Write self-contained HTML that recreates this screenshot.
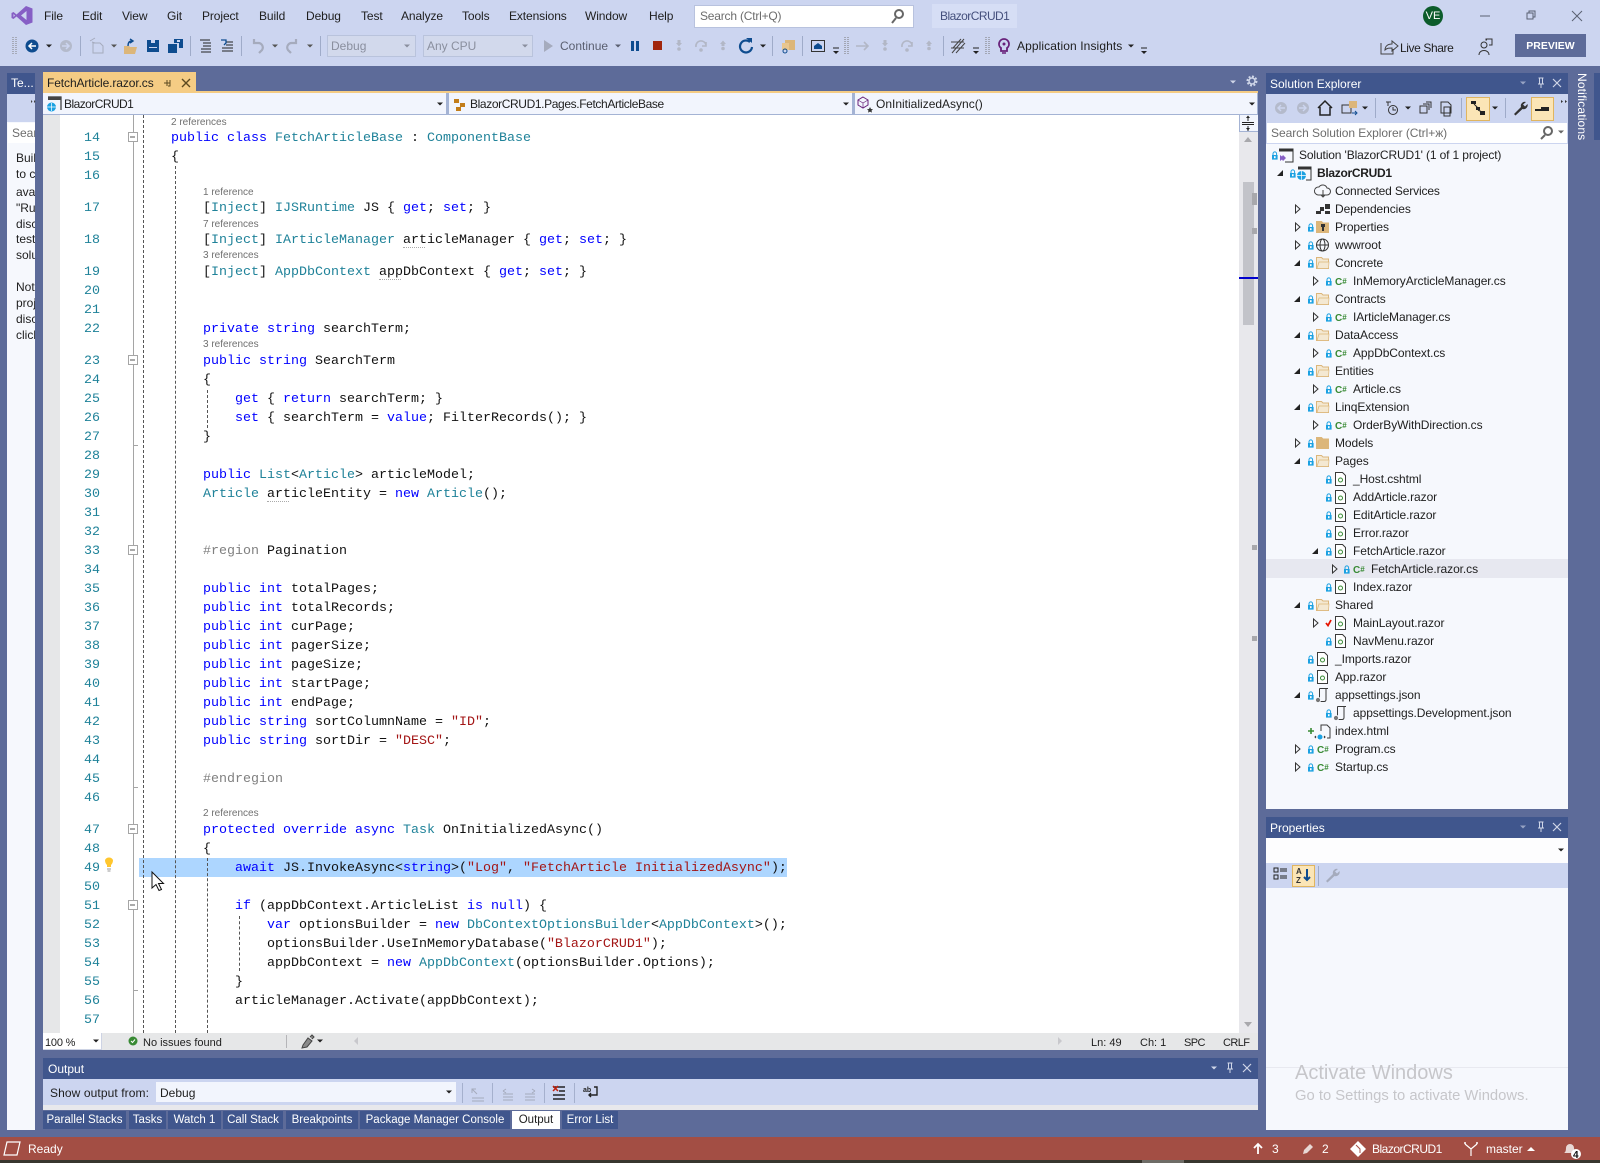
<!DOCTYPE html>
<html><head><meta charset="utf-8"><title>FetchArticle.razor.cs</title>
<style>
html,body{margin:0;padding:0;width:1600px;height:1163px;overflow:hidden;background:#5d6b99;font-family:"Liberation Sans","DejaVu Sans",sans-serif;font-size:12px;color:#1e1e1e}
.b{position:absolute}
.t{position:absolute;white-space:pre;line-height:16px;font-size:12px}
.m{top:8px;color:#1e1e1e;letter-spacing:-.1px}
.h{color:#fff}
.c{position:absolute;white-space:pre;font:13.33px/19px "Liberation Mono",monospace;color:#111;height:19px;margin-top:2px}
.c0{left:171px}.c4{left:203px}.c8{left:235px}.c12{left:267px}
.n{position:absolute;left:60px;width:40px;text-align:right;font:13.33px/19px "Liberation Mono",monospace;color:#1f8299;height:19px;margin-top:2px}
i{font-style:normal;color:#0000ff}
u{text-decoration:none;color:#1f8299}
s{text-decoration:none;color:#a31515}
.l{position:absolute;white-space:pre;font-size:10px;line-height:12px;color:#707070;margin-top:1px}
.r{position:absolute;white-space:pre;font-size:12px;line-height:18px;height:18px;color:#1e1e1e;letter-spacing:-.08px}
.o{position:absolute;top:1111px;height:18px;background:#40568d;color:#fff;font-size:11.5px;line-height:18px;text-align:center;white-space:pre}
.s{position:absolute;white-space:pre;font-size:11px;line-height:16px;top:1035px;color:#1e1e1e}
.w{position:absolute;white-space:pre;font-size:12px;line-height:16px;top:1141px;color:#fff}
</style></head><body>

<!-- top chrome -->
<div class="b" style="left:0;top:0;width:1600px;height:66px;background:#ccd5f0"></div>
<div class="t m" style="left:44px">File</div>
<div class="t m" style="left:82px">Edit</div>
<div class="t m" style="left:122px">View</div>
<div class="t m" style="left:167px">Git</div>
<div class="t m" style="left:202px">Project</div>
<div class="t m" style="left:259px">Build</div>
<div class="t m" style="left:306px">Debug</div>
<div class="t m" style="left:361px">Test</div>
<div class="t m" style="left:401px">Analyze</div>
<div class="t m" style="left:462px">Tools</div>
<div class="t m" style="left:509px">Extensions</div>
<div class="t m" style="left:585px">Window</div>
<div class="t m" style="left:649px">Help</div>
<div class="b" style="left:694px;top:5px;width:218px;height:21px;background:#fff;border:1px solid #b8c2de"></div>
<div class="t" style="left:700px;top:8px;color:#6d6d6d;letter-spacing:-.2px">Search (Ctrl+Q)</div>
<div class="b" style="left:932px;top:4px;width:85px;height:24px;background:#d6def5"></div>
<div class="t" style="left:940px;top:8px;color:#444f7c;letter-spacing:-.55px">BlazorCRUD1</div>

<div class="b" style="left:327px;top:35px;width:87px;height:20px;background:#d2d9ec;border:1px solid #b9c3dc"></div>
<div class="t" style="left:331px;top:38px;color:#8a8f9e">Debug</div>
<div class="b" style="left:423px;top:35px;width:108px;height:20px;background:#d2d9ec;border:1px solid #b9c3dc"></div>
<div class="t" style="left:427px;top:38px;color:#8a8f9e">Any CPU</div>
<div class="t" style="left:560px;top:38px;color:#5a5f70">Continue</div>
<div class="t" style="left:1017px;top:38px;letter-spacing:.1px">Application Insights</div>
<div class="t" style="left:1400px;top:40px;letter-spacing:-.4px">Live Share</div>
<div class="b" style="left:1515px;top:34px;width:71px;height:23px;background:#5d6b99;color:#fff;font-weight:bold;font-size:10.5px;line-height:24px;text-align:center">PREVIEW</div>
<div class="b" style="left:1423px;top:6px;width:20px;height:20px;border-radius:10px;background:#0c5c2b;color:#fff;font-size:11px;line-height:20px;text-align:center">VE</div>

<!-- left panel -->
<div class="b" style="left:7px;top:73px;width:28px;height:21px;background:#40568d"></div>
<div class="t h" style="left:11px;top:75px">Te...</div>
<div class="b" style="left:7px;top:94px;width:28px;height:28px;background:#ccd5f0"></div>
<div class="b" style="left:7px;top:122px;width:28px;height:1008px;background:#f6f8fd;overflow:hidden">
<div class="b" style="left:1px;top:1px;width:30px;height:20px;background:#fff"></div>
<div class="t" style="left:5px;top:3px;color:#6d6d6d">Search</div>
<div class="t" style="left:9px;top:28px">Build</div>
<div class="t" style="left:9px;top:44px">to co</div>
<div class="t" style="left:9px;top:62px">avai</div>
<div class="t" style="left:9px;top:78px">"Run</div>
<div class="t" style="left:9px;top:94px">disc</div>
<div class="t" style="left:9px;top:109px">test</div>
<div class="t" style="left:9px;top:125px">solu</div>
<div class="t" style="left:9px;top:157px">Note</div>
<div class="t" style="left:9px;top:173px">proj</div>
<div class="t" style="left:9px;top:189px">disc</div>
<div class="t" style="left:9px;top:205px">click</div>
</div>

<!-- document tab -->
<div class="b" style="left:43px;top:72px;width:153px;height:19px;background:#f5cc84"></div>
<div class="t" style="left:47px;top:75px;color:#1e1e1e;letter-spacing:-.1px">FetchArticle.razor.cs</div>
<div class="b" style="left:43px;top:91px;width:1215px;height:2px;background:#f5cc84"></div>
<!-- nav bar -->
<div class="b" style="left:43px;top:93px;width:1215px;height:22px;background:#a4b3d4"></div>
<div class="b" style="left:43px;top:93px;width:403px;height:21px;background:#f2f5fd"></div>
<div class="b" style="left:449px;top:93px;width:403px;height:21px;background:#f2f5fd"></div>
<div class="b" style="left:855px;top:93px;width:402px;height:21px;background:#f2f5fd"></div>
<div class="t" style="left:64px;top:96px;letter-spacing:-.55px">BlazorCRUD1</div>
<div class="t" style="left:470px;top:96px;letter-spacing:-.38px">BlazorCRUD1.Pages.FetchArticleBase</div>
<div class="t" style="left:876px;top:96px">OnInitializedAsync()</div>

<!-- editor -->
<div class="b" style="left:43px;top:115px;width:1215px;height:918px;background:#fff;overflow:hidden"></div>
<div class="b" style="left:43px;top:115px;width:17px;height:918px;background:#e6e7e8"></div>
<div class="b" style="left:133px;top:115px;width:1px;height:918px;background:#a5a5a5"></div>
<div class="b" style="left:139px;top:858px;width:648px;height:19px;background:#add6ff"></div>
<div class="b" style="left:143px;top:115px;width:0;height:918px;border-left:1px dashed #555"></div>
<div class="b" style="left:175px;top:166px;width:0;height:867px;border-left:1px dashed #555"></div>
<div class="b" style="left:207px;top:390px;width:0;height:38px;border-left:1px dashed #555"></div>
<div class="b" style="left:207px;top:858px;width:0;height:175px;border-left:1px dashed #555"></div>
<div class="b" style="left:239px;top:916px;width:0;height:55px;border-left:1px dashed #555"></div>
<div class="b" style="left:133px;top:445px;width:5px;height:1px;background:#a5a5a5"></div>
<div class="b" style="left:133px;top:787px;width:5px;height:1px;background:#a5a5a5"></div>
<div class="b" style="left:133px;top:990px;width:5px;height:1px;background:#a5a5a5"></div>

<div class="l" style="left:171px;top:116px">2 references</div>
<div class="l" style="left:203px;top:186px">1 reference</div>
<div class="l" style="left:203px;top:218px">7 references</div>
<div class="l" style="left:203px;top:249px">3 references</div>
<div class="l" style="left:203px;top:338px">3 references</div>
<div class="l" style="left:203px;top:807px">2 references</div>

<div class="n" style="top:127px">14</div><div class="n" style="top:146px">15</div><div class="n" style="top:165px">16</div><div class="n" style="top:197px">17</div><div class="n" style="top:229px">18</div><div class="n" style="top:261px">19</div><div class="n" style="top:280px">20</div><div class="n" style="top:299px">21</div><div class="n" style="top:318px">22</div><div class="n" style="top:350px">23</div><div class="n" style="top:369px">24</div><div class="n" style="top:388px">25</div><div class="n" style="top:407px">26</div><div class="n" style="top:426px">27</div><div class="n" style="top:445px">28</div><div class="n" style="top:464px">29</div><div class="n" style="top:483px">30</div><div class="n" style="top:502px">31</div><div class="n" style="top:521px">32</div><div class="n" style="top:540px">33</div><div class="n" style="top:559px">34</div><div class="n" style="top:578px">35</div><div class="n" style="top:597px">36</div><div class="n" style="top:616px">37</div><div class="n" style="top:635px">38</div><div class="n" style="top:654px">39</div><div class="n" style="top:673px">40</div><div class="n" style="top:692px">41</div><div class="n" style="top:711px">42</div><div class="n" style="top:730px">43</div><div class="n" style="top:749px">44</div><div class="n" style="top:768px">45</div><div class="n" style="top:787px">46</div><div class="n" style="top:819px">47</div><div class="n" style="top:838px">48</div><div class="n" style="top:857px">49</div><div class="n" style="top:876px">50</div><div class="n" style="top:895px">51</div><div class="n" style="top:914px">52</div><div class="n" style="top:933px">53</div><div class="n" style="top:952px">54</div><div class="n" style="top:971px">55</div><div class="n" style="top:990px">56</div><div class="n" style="top:1009px">57</div>

<div class="c c0" style="top:127px"><i>public</i> <i>class</i> <u>FetchArticleBase</u> : <u>ComponentBase</u></div>
<div class="c c0" style="top:146px">{</div>
<div class="c c4" style="top:197px">[<u>Inject</u>] <u>IJSRuntime</u> JS { <i>get</i>; <i>set</i>; }</div>
<div class="c c4" style="top:229px">[<u>Inject</u>] <u>IArticleManager</u> articleManager { <i>get</i>; <i>set</i>; }</div>
<div class="c c4" style="top:261px">[<u>Inject</u>] <u>AppDbContext</u> appDbContext { <i>get</i>; <i>set</i>; }</div>
<div class="c c4" style="top:318px"><i>private</i> <i>string</i> searchTerm;</div>
<div class="c c4" style="top:350px"><i>public</i> <i>string</i> SearchTerm</div>
<div class="c c4" style="top:369px">{</div>
<div class="c c8" style="top:388px"><i>get</i> { <i>return</i> searchTerm; }</div>
<div class="c c8" style="top:407px"><i>set</i> { searchTerm = <i>value</i>; FilterRecords(); }</div>
<div class="c c4" style="top:426px">}</div>
<div class="c c4" style="top:464px"><i>public</i> <u>List</u>&lt;<u>Article</u>&gt; articleModel;</div>
<div class="c c4" style="top:483px"><u>Article</u> articleEntity = <i>new</i> <u>Article</u>();</div>
<div class="c c4" style="top:540px"><span style="color:#808080">#region</span> Pagination</div>
<div class="c c4" style="top:578px"><i>public</i> <i>int</i> totalPages;</div>
<div class="c c4" style="top:597px"><i>public</i> <i>int</i> totalRecords;</div>
<div class="c c4" style="top:616px"><i>public</i> <i>int</i> curPage;</div>
<div class="c c4" style="top:635px"><i>public</i> <i>int</i> pagerSize;</div>
<div class="c c4" style="top:654px"><i>public</i> <i>int</i> pageSize;</div>
<div class="c c4" style="top:673px"><i>public</i> <i>int</i> startPage;</div>
<div class="c c4" style="top:692px"><i>public</i> <i>int</i> endPage;</div>
<div class="c c4" style="top:711px"><i>public</i> <i>string</i> sortColumnName = <s>"ID"</s>;</div>
<div class="c c4" style="top:730px"><i>public</i> <i>string</i> sortDir = <s>"DESC"</s>;</div>
<div class="c c4" style="top:768px;color:#808080">#endregion</div>
<div class="c c4" style="top:819px"><i>protected</i> <i>override</i> <i>async</i> <u>Task</u> OnInitializedAsync()</div>
<div class="c c4" style="top:838px">{</div>
<div class="c c8" style="top:857px"><i>await</i> JS.InvokeAsync&lt;<i>string</i>&gt;(<s>"Log"</s>, <s>"FetchArticle InitializedAsync"</s>);</div>
<div class="c c8" style="top:895px"><i>if</i> (appDbContext.ArticleList <i>is</i> <i>null</i>) {</div>
<div class="c c12" style="top:914px"><i>var</i> optionsBuilder = <i>new</i> <u>DbContextOptionsBuilder</u>&lt;<u>AppDbContext</u>&gt;();</div>
<div class="c c12" style="top:933px">optionsBuilder.UseInMemoryDatabase(<s>"BlazorCRUD1"</s>);</div>
<div class="c c12" style="top:952px">appDbContext = <i>new</i> <u>AppDbContext</u>(optionsBuilder.Options);</div>
<div class="c c8" style="top:971px">}</div>
<div class="c c8" style="top:990px">articleManager.Activate(appDbContext);</div>

<!-- squiggle hints -->
<div class="b" style="left:403px;top:247px;width:22px;height:0;border-top:1px dotted #aaa"></div>
<div class="b" style="left:379px;top:279px;width:22px;height:0;border-top:1px dotted #aaa"></div>
<div class="b" style="left:267px;top:501px;width:22px;height:0;border-top:1px dotted #aaa"></div>

<!-- editor scrollbar -->
<div class="b" style="left:1239px;top:115px;width:19px;height:918px;background:#e8e8ec"></div>
<div class="b" style="left:1239px;top:115px;width:18px;height:16px;background:#f2f5fd;border-left:1px solid #a4b3d4;border-bottom:1px solid #a4b3d4"></div>
<div class="b" style="left:1243px;top:182px;width:11px;height:143px;background:#c2c3c9"></div>
<div class="b" style="left:1252px;top:193px;width:5px;height:12px;background:#a8a8ac"></div>
<div class="b" style="left:1252px;top:228px;width:5px;height:6px;background:#a8a8ac"></div>
<div class="b" style="left:1252px;top:545px;width:5px;height:5px;background:#a8a8ac"></div>
<div class="b" style="left:1252px;top:636px;width:5px;height:5px;background:#a8a8ac"></div>
<div class="b" style="left:1239px;top:277px;width:19px;height:2px;background:#0000cd"></div>

<!-- editor status strip -->
<div class="b" style="left:43px;top:1033px;width:1215px;height:17px;background:#e6e7e8"></div>
<div class="b" style="left:43px;top:1033px;width:58px;height:16px;background:#fff;border:1px solid #cdd3e4;border-width:0 1px 1px 0"></div>
<div class="s" style="left:45px;letter-spacing:-.2px">100 %</div>
<div class="s" style="left:143px">No issues found</div>
<div class="b" style="left:286px;top:1035px;width:1px;height:13px;background:#b5b5b8"></div>
<div class="s" style="left:1091px">Ln: 49</div>
<div class="s" style="left:1140px">Ch: 1</div>
<div class="s" style="left:1184px;letter-spacing:-.6px">SPC</div>
<div class="s" style="left:1223px;letter-spacing:-.6px">CRLF</div>

<!-- output -->
<div class="b" style="left:43px;top:1058px;width:1215px;height:21px;background:#40568d"></div>
<div class="t h" style="left:48px;top:1061px">Output</div>
<div class="b" style="left:43px;top:1079px;width:1215px;height:26px;background:#ccd5f0"></div>
<div class="b" style="left:43px;top:1105px;width:1215px;height:5px;background:#e8e8ec"></div>
<div class="t" style="left:50px;top:1085px;letter-spacing:.1px">Show output from:</div>
<div class="b" style="left:156px;top:1082px;width:300px;height:20px;background:#f2f5fd"></div>
<div class="t" style="left:160px;top:1085px">Debug</div>
<div class="o" style="left:43px;width:83px">Parallel Stacks</div>
<div class="o" style="left:129px;width:37px">Tasks</div>
<div class="o" style="left:168px;width:53px">Watch 1</div>
<div class="o" style="left:223px;width:60px">Call Stack</div>
<div class="o" style="left:286px;width:72px">Breakpoints</div>
<div class="o" style="left:360px;width:150px">Package Manager Console</div>
<div class="o" style="left:512px;width:48px;background:#fff;color:#1e1e1e">Output</div>
<div class="o" style="left:562px;width:56px">Error List</div>

<!-- Solution explorer -->
<div class="b" style="left:1266px;top:73px;width:302px;height:21px;background:#40568d"></div>
<div class="t h" style="left:1270px;top:76px">Solution Explorer</div>
<div class="b" style="left:1266px;top:94px;width:302px;height:28px;background:#ccd5f0"></div>
<div class="b" style="left:1466px;top:97px;width:22px;height:22px;background:#fbe5b6;border:1px solid #e0b560"></div>
<div class="b" style="left:1531px;top:97px;width:21px;height:22px;background:#fbe5b6;border:1px solid #e0b560"></div>
<div class="b" style="left:1266px;top:122px;width:302px;height:22px;background:#ccd5f0"></div>
<div class="b" style="left:1267px;top:123px;width:300px;height:20px;background:#fff"></div>
<div class="t" style="left:1271px;top:125px;color:#6d6d6d;letter-spacing:-.05px">Search Solution Explorer (Ctrl+ж)</div>
<div class="b" style="left:1266px;top:144px;width:302px;height:665px;background:#f6f8fd"></div>
<div class="b" style="left:1266px;top:559px;width:302px;height:19px;background:#e7e8f0"></div>

<div class="r" style="left:1299px;top:146px;letter-spacing:-.13px">Solution 'BlazorCRUD1' (1 of 1 project)</div>
<div class="r" style="left:1317px;top:164px;font-weight:bold;letter-spacing:-.3px">BlazorCRUD1</div>
<div class="r" style="left:1335px;top:182px;letter-spacing:-.15px">Connected Services</div>
<div class="r" style="left:1335px;top:200px">Dependencies</div>
<div class="r" style="left:1335px;top:218px">Properties</div>
<div class="r" style="left:1335px;top:236px">wwwroot</div>
<div class="r" style="left:1335px;top:254px">Concrete</div>
<div class="r" style="left:1353px;top:272px">InMemoryArcticleManager.cs</div>
<div class="r" style="left:1335px;top:290px">Contracts</div>
<div class="r" style="left:1353px;top:308px">IArticleManager.cs</div>
<div class="r" style="left:1335px;top:326px">DataAccess</div>
<div class="r" style="left:1353px;top:344px">AppDbContext.cs</div>
<div class="r" style="left:1335px;top:362px">Entities</div>
<div class="r" style="left:1353px;top:380px">Article.cs</div>
<div class="r" style="left:1335px;top:398px">LinqExtension</div>
<div class="r" style="left:1353px;top:416px">OrderByWithDirection.cs</div>
<div class="r" style="left:1335px;top:434px">Models</div>
<div class="r" style="left:1335px;top:452px">Pages</div>
<div class="r" style="left:1353px;top:470px">_Host.cshtml</div>
<div class="r" style="left:1353px;top:488px">AddArticle.razor</div>
<div class="r" style="left:1353px;top:506px">EditArticle.razor</div>
<div class="r" style="left:1353px;top:524px">Error.razor</div>
<div class="r" style="left:1353px;top:542px">FetchArticle.razor</div>
<div class="r" style="left:1371px;top:560px">FetchArticle.razor.cs</div>
<div class="r" style="left:1353px;top:578px">Index.razor</div>
<div class="r" style="left:1335px;top:596px">Shared</div>
<div class="r" style="left:1353px;top:614px">MainLayout.razor</div>
<div class="r" style="left:1353px;top:632px">NavMenu.razor</div>
<div class="r" style="left:1335px;top:650px">_Imports.razor</div>
<div class="r" style="left:1335px;top:668px">App.razor</div>
<div class="r" style="left:1335px;top:686px">appsettings.json</div>
<div class="r" style="left:1353px;top:704px">appsettings.Development.json</div>
<div class="r" style="left:1335px;top:722px">index.html</div>
<div class="r" style="left:1335px;top:740px">Program.cs</div>
<div class="r" style="left:1335px;top:758px">Startup.cs</div>

<!-- Properties -->
<div class="b" style="left:1266px;top:817px;width:302px;height:21px;background:#40568d"></div>
<div class="t h" style="left:1270px;top:820px">Properties</div>
<div class="b" style="left:1266px;top:838px;width:302px;height:25px;background:#fdfdfe"></div>
<div class="b" style="left:1266px;top:863px;width:302px;height:25px;background:#ccd5f0"></div>
<div class="b" style="left:1292px;top:865px;width:21px;height:20px;background:#fbe5b6;border:1px solid #e0b560"></div>
<div class="b" style="left:1266px;top:888px;width:302px;height:242px;background:#f6f8fd"></div>
<div class="b" style="left:1266px;top:1067px;width:302px;height:1px;background:#e8e9f0"></div>
<div class="t" style="left:1295px;top:1061px;font-size:20px;line-height:24px;color:#c6c6ca">Activate Windows</div>
<div class="t" style="left:1295px;top:1087px;font-size:14.8px;line-height:18px;color:#c6c6ca">Go to Settings to activate Windows.</div>

<!-- Notifications -->
<div class="b" style="left:1594px;top:73px;width:6px;height:67px;background:#40568d"></div>
<div class="t h" style="left:1573px;top:73px;width:16px;height:67px;writing-mode:vertical-rl;line-height:14px;letter-spacing:.15px">Notifications</div>

<!-- status bar -->
<div class="b" style="left:0;top:1137px;width:1600px;height:23px;background:#a34e44"></div>
<div class="b" style="left:0;top:1160px;width:1600px;height:3px;background:#38362e"></div>
<div class="b" style="left:1142px;top:1160px;width:42px;height:3px;background:#6e6c66"></div>
<div class="w" style="left:28px">Ready</div>
<div class="w" style="left:1272px">3</div>
<div class="w" style="left:1322px">2</div>
<div class="w" style="left:1372px;letter-spacing:-.5px">BlazorCRUD1</div>
<div class="w" style="left:1486px">master</div>

<!-- icon overlay -->
<svg class="b" style="left:0;top:0" width="1600" height="1163" viewBox="0 0 1600 1163">
<defs>
<path id="dd" d="M-3-1.5h6L0 1.5z"/>
<g id="lk"><path d="M1 .5V-1.3a1.8 1.8 0 013.6 0V.5" fill="none" stroke="#1ba1e2"/><rect y="0" width="5.6" height="4.6" fill="#1ba1e2"/><rect x="2" y="1.2" width="1.6" height="2" fill="#fff"/></g>
<path id="ar" d="M.5-4L5 0 .5 4z" fill="#f6f8fd" stroke="#333"/>
<path id="ex" d="M6-3V3H0z" fill="#222"/>
<g id="fo"><path d="M.5-5.5h5l1.5 1.5h5.5V5.5H.5z" fill="#f4e8d2" stroke="#dcb67a"/><path d="M1 5.5L3-1H13L12.5 5.5z" fill="#f4e8d2" stroke="#dcb67a" stroke-width=".7"/></g>
<path id="fc" d="M.5-5.5h5l1.5 1.5h5.5V5.5H.5z" fill="#dcb67a" stroke="#dcb67a"/>
<g id="rz"><path d="M.5-6.5H7.5l3 3V6.5H.5z" fill="#fff" stroke="#3a3a3a"/><circle cx="5.5" cy="1" r="2" fill="none" stroke="#388a34"/></g>
<g id="js"><path d="M4.5-6.5H13M11-6.5v11q0 2-2 2H3" fill="none" stroke="#3a3a3a"/><path d="M4.5-6.5V3" stroke="#3a3a3a"/><circle cx="3" cy="5" r="2.6" fill="#777" stroke="#f6f8fd"/></g>
<g id="sep"><rect width="1" height="20" fill="#9fabc9"/></g>
<g id="pin"><path d="M-2.5-5h5M-1.5-5V1h3V-5M-3 1h6M0 1v4" fill="none" stroke="#cfd6e8"/></g>
<g id="xx"><path d="M-4-4L4 4M4-4L-4 4" stroke="#cfd6e8" stroke-width="1.2"/></g>
<g id="up"><path d="M0-3.5L3 0H1.5V2h-3V0H-3z" fill="#b2b7c6"/><circle cy="4.5" r="1.8" fill="#b2b7c6"/></g>
<g id="dn"><path d="M0 2.5L3-1H1.5V-4h-3v3H-3z" fill="#b2b7c6"/><circle cy="5" r="1.8" fill="#b2b7c6"/></g>
<g id="ov"><path d="M-3-3h6" stroke="#222"/><path d="M-3 0h6L0 3z" fill="#222"/></g>
<g id="grip"><path d="M0 0v17M3 0v17" stroke="#777" stroke-dasharray="1 1"/></g>
<path id="wr" d="M6-6a4 4 0 00-5 5L-6 6-4.5 7.5 2.5 1a4 4 0 005-5L5-1.5 3-3.5z"/>
</defs>

<!-- VS logo -->
<path d="M26 6l6.500 2.500v14L26 25l-9.500-8.500-3 2.500-2-1v-5l2-1 3 2.500zM26.500 11L21 15.500l5.500 4.500zM13.500 14v3l1.500-1.500z" fill="#865fc5" fill-rule="evenodd"/>
<!-- menu & toolbar -->
<g stroke="#666" stroke-width="2" fill="none"><circle cx="899" cy="14" r="4"/><path d="M896 18l-4 5"/></g>
<g fill="#222"><use href="#dd" x="49" y="46"/><use href="#dd" x="114" y="46" fill="#555"/></g>
<g stroke="#808080"><path d="M13 37v18M16 37v18" stroke-dasharray="1 1"/></g>
<circle cx="32" cy="46" r="6.500" fill="#0e4c8f"/><path d="M36 46h-7m3-3l-3 3 3 3" stroke="#fff" stroke-width="1.500" fill="none"/>
<circle cx="66" cy="46" r="6" fill="#b4bacb"/><path d="M62 46h7m-3-3l3 3-3 3" stroke="#ccd5f0" stroke-width="1.500" fill="none"/>
<use href="#sep" x="80" y="36"/><use href="#sep" x="190" y="36"/><use href="#sep" x="241" y="36"/><use href="#sep" x="320" y="36"/><use href="#sep" x="772" y="36"/><use href="#sep" x="802" y="36"/><use href="#sep" x="943" y="36"/>
<path d="M93 43h7l3 3v7H93z" fill="none" stroke="#a5abbd"/><path d="M90 41l5-3m-3 4l3 1" stroke="#a5abbd"/>
<path d="M124 46h5l1 1h7l-2 7h-11z" fill="#dcb67a"/><path d="M128 46c0-3 1-5 4-5m-2-2l3 2-3 2" stroke="#0e4c8f" fill="none" stroke-width="1.400"/>
<path d="M147 40h12v12h-12z" fill="#0e4c8f"/><rect x="151" y="40" width="4" height="3" fill="#ccd5f0"/><rect x="149" y="47" width="8" height="1" fill="#ccd5f0"/>
<path d="M168 44h9v9h-9z" fill="#0e4c8f"/><path d="M174 39h9v9h-4v-5h-5z" fill="#0e4c8f"/><rect x="177" y="40" width="3" height="2" fill="#ccd5f0"/>
<g stroke="#222"><path d="M200 40h10M203 43h8M203 46h8M201 49h10M201 52h10"/><path d="M226 42h7M226 45h7M222 48h11M222 51h11"/></g><path d="M221 40h5v3l-2 2" stroke="#0e4c8f" stroke-width="1.300" fill="none"/>
<path d="M254 43h4a4.500 4.500 0 014 7l-3 3M254 39v4h4" fill="none" stroke="#a5abbd" stroke-width="2.200"/><use href="#dd" x="275" y="46" fill="#555"/>
<path d="M296 43h-4a4.500 4.500 0 00-4 7l3 3M296 39v4h-4" fill="none" stroke="#a5abbd" stroke-width="2.200"/><use href="#dd" x="310" y="46" fill="#555"/>
<use href="#dd" x="407" y="46" fill="#8a8f9e"/><use href="#dd" x="525" y="46" fill="#8a8f9e"/>
<path d="M544 40l9 6-9 6z" fill="#a5abbd"/><use href="#dd" x="618" y="46" fill="#5a5f70"/>
<rect x="631" y="41" width="3" height="10" fill="#0e4c8f"/><rect x="636" y="41" width="3" height="10" fill="#0e4c8f"/>
<rect x="653" y="41" width="9" height="9" fill="#a1260d"/>
<use href="#dn" x="679" y="44"/><path d="M696 47a5 5 0 0110-2M706 42v4h-4" fill="none" stroke="#b2b7c6" stroke-width="1.600"/><circle cx="701" cy="50" r="1.800" fill="#b2b7c6"/><use href="#up" x="723" y="44"/>
<path d="M750 42a6 6 0 10 2 5" fill="none" stroke="#0e4c8f" stroke-width="2.200"/><path d="M746 38h6v5z" fill="#0e4c8f"/><use href="#dd" x="763" y="46" fill="#222"/>
<rect x="785" y="40" width="10" height="10" fill="#dcb67a"/><rect x="782" y="43" width="7" height="7" fill="#e8c68f"/><circle cx="785" cy="51" r="2" fill="none" stroke="#0e4c8f"/>
<rect x="811.500" y="40.500" width="13" height="11" fill="none" stroke="#333"/><path d="M814 46l4-3 4 3v3h-8z" fill="#0e4c8f"/>
<use href="#ov" x="836" y="51"/><use href="#grip" x="845" y="37"/>
<path d="M856 46h12m-4-4l4 4-4 4" fill="none" stroke="#b2b7c6" stroke-width="1.600"/>
<use href="#dn" x="885" y="44"/><path d="M902 47a5 5 0 0110-2M912 42v4h-4" fill="none" stroke="#b2b7c6" stroke-width="1.600"/><circle cx="907" cy="50" r="1.800" fill="#b2b7c6"/><use href="#up" x="929" y="44"/>
<path d="M952 53l12-14M953 48l8-9M956 53l9-10M951 42h13M951 48h13" stroke="#444" fill="none"/>
<use href="#ov" x="976" y="51"/><use href="#grip" x="986" y="37"/>
<path d="M1004 39a5 5 0 013 9v3h-6v-3a5 5 0 013-9z" fill="none" stroke="#68217a" stroke-width="1.800"/><circle cx="1004" cy="44" r="1.500" fill="#68217a"/><path d="M1002 53h4" stroke="#68217a" stroke-width="1.500"/>
<use href="#dd" x="1131" y="46" fill="#222"/><use href="#ov" x="1144" y="51"/>
<path d="M1381 43v11h12v-5M1385 50c0-4 3-6 7-6v-3l6 5-6 5v-3c-3 0-5 0-7 2z" fill="none" stroke="#444"/>
<circle cx="1484" cy="45" r="3" fill="none" stroke="#333"/><path d="M1479 55c0-6 10-6 10 0M1487 40h-1v-1h6v6h-3" fill="none" stroke="#333"/>
<path d="M1480 16h10" stroke="#5a6172"/><path d="M1527 19v-6h6v6zM1529 13v-2h6v6h-2" fill="none" stroke="#5a6172"/><path d="M1572 11l10 10m0-10l-10 10" stroke="#5a6172"/>

<!-- doc tab -->
<path d="M164 83h6M167 80v6M170 80v6h-2" fill="none" stroke="#5c4a20"/>
<path d="M182 79l8 8m0-8l-8 8" stroke="#5c4a20" stroke-width="1.400"/>
<use href="#dd" x="1233" y="82" fill="#cfd6e8"/><circle cx="1252" cy="81" r="4.500" fill="none" stroke="#cfd6e8" stroke-width="2" stroke-dasharray="2 1.500"/><circle cx="1252" cy="81" r="3" fill="none" stroke="#cfd6e8" stroke-width="1.500"/>

<!-- nav icons -->
<path d="M48 97h13v13" fill="none" stroke="#333" stroke-width="1.200"/><rect x="48" y="97" width="13" height="3" fill="#444"/><circle cx="51.500" cy="107" r="4.500" fill="#1ba1e2"/><path d="M47 107h9M51.500 103v8" stroke="#fff" stroke-width=".7"/>
<path d="M454 99h5v4h-5zM460 103h5v4h-5zM456 107h5v4h-5z" fill="#c27d1a"/>
<path d="M863 97l5 3v5l-5 3-5-3v-5z" fill="none" stroke="#68217a"/><path d="M858 100l5 3 5-3M863 103v5" stroke="#68217a" fill="none" stroke-width=".7"/><path d="M870 107l1 2 2 .3-1.500 1.300.5 2-2-1-2 1 .5-2-1.500-1.300 2-.3z" fill="#333"/>
<use href="#dd" x="440" y="104" fill="#222"/><use href="#dd" x="846" y="104" fill="#222"/><use href="#dd" x="1252" y="104" fill="#222"/>

<!-- editor gutter & scroll -->
<g fill="#fff" stroke="#a5a5a5"><rect x="128.500" y="132.500" width="9" height="9"/><rect x="128.500" y="355.500" width="9" height="9"/><rect x="128.500" y="545.500" width="9" height="9"/><rect x="128.500" y="824.500" width="9" height="9"/><rect x="128.500" y="900.500" width="9" height="9"/></g>
<path d="M130 137h5M130 360h5M130 550h5M130 829h5M130 905h5" stroke="#555"/>
<path d="M105 860a4.500 4.500 0 018 0q0 3-2 5v2h-4v-2q-2-2-2-5z" fill="#ffc62e"/><path d="M107 869h4M107.500 871h3" stroke="#999"/>
<path d="M152 872v16l4-3.500 3 6 2.500-1-3-6h5z" fill="#fff" stroke="#111"/>
<path d="M1242 122.500h12M1242 124.500h12" stroke="#222"/><path d="M1248 116v5M1248 131v-5" stroke="#222"/><path d="M1246 118l2-2.500 2 2.500zM1246 128l2 2.500 2-2.500z" fill="#222"/>
<path d="M1248 137l4 5h-8z" fill="#a8a8ac"/><path d="M1248 1027l-4-5h8z" fill="#a8a8ac"/>

<!-- status strip -->
<use href="#dd" x="96" y="1041" fill="#222"/>
<circle cx="133" cy="1041" r="4.500" fill="#388a34"/><path d="M131 1041l1.500 1.500 2.500-3" stroke="#fff" fill="none"/>
<path d="M303 1045l5-7 4 3-5 6-5 1zM310 1037l2-2 2 2-2 2" fill="#8a8a8a" stroke="#444"/><use href="#dd" x="320" y="1041" fill="#222"/>
<path d="M358 1037l-4 4 4 4z" fill="#c8c8cc"/><path d="M1058 1037l4 4-4 4z" fill="#c8c8cc"/>

<!-- output -->
<use href="#dd" x="1214" y="1068" fill="#cfd6e8"/><use href="#pin" x="1230" y="1068"/><use href="#xx" x="1247" y="1068"/>
<use href="#dd" x="449" y="1092" fill="#222"/>
<g><rect x="462" y="1083" width="1" height="20" fill="#a5b0cd"/><rect x="492" y="1083" width="1" height="20" fill="#a5b0cd"/><rect x="544" y="1083" width="1" height="20" fill="#a5b0cd"/><rect x="574" y="1083" width="1" height="20" fill="#a5b0cd"/></g>
<path d="M472 1098h12M472 1101h12M476 1089h-4v4m0-4l5 5" stroke="#a5abbd" fill="none"/>
<path d="M503 1094h10M503 1097h10M503 1100h10M503 1091l3-2M503 1091l3 2" stroke="#a5abbd" fill="none"/>
<path d="M525 1094h10M525 1097h10M525 1100h10M535 1091l-3-2M535 1091l-3 2" stroke="#a5abbd" fill="none"/>
<path d="M553 1087h12M559 1091h6M553 1095h12M553 1099h12" stroke="#222" stroke-width="1.600"/><path d="M553 1086l5 5m0-5l-5 5" stroke="#c1200d" stroke-width="1.500"/>
<text x="583" y="1092" font-size="7" font-weight="bold" fill="#222">ab</text><path d="M594 1087h3v8h-8m2-2l-2 2 2 2" fill="none" stroke="#222" stroke-width="1.400"/>

<!-- SE title -->
<use href="#dd" x="1523" y="83" fill="#97a3c4"/><use href="#pin" x="1541" y="83"/><use href="#xx" x="1557" y="83"/>
<use href="#dd" x="1523" y="827" fill="#97a3c4"/><use href="#pin" x="1541" y="827"/><use href="#xx" x="1557" y="827"/>
<!-- SE toolbar -->
<circle cx="1281" cy="108" r="6" fill="#b4bacb"/><circle cx="1303" cy="108" r="6" fill="#b4bacb"/><path d="M1285 108h-7m3-3l-3 3 3 3M1299 108h7m-3-3l3 3-3 3" stroke="#ccd5f0" stroke-width="1.400" fill="none"/>
<path d="M1318 108l7-7 7 7M1320 107v8h10v-8" fill="none" stroke="#222" stroke-width="1.500"/>
<rect x="1342" y="105" width="9" height="8" fill="none" stroke="#333"/><rect x="1349" y="101" width="8" height="7" fill="#dcb67a"/><path d="M1352 113h4m-1-2l2 2-2 2" stroke="#0e4c8f" fill="none"/>
<use href="#dd" x="1365" y="108" fill="#222"/><rect x="1375" y="98" width="1" height="20" fill="#9fabc9"/>
<circle cx="1393" cy="110" r="4.500" fill="none" stroke="#333"/><path d="M1393 107v3h3M1386 102h5M1388 102v4" stroke="#333" fill="none"/><use href="#dd" x="1408" y="108" fill="#222"/>
<path d="M1420 106h7v7h-7zM1423 104h6v6M1426 102h5v6" fill="none" stroke="#333"/>
<path d="M1441 102h7l3 3v8h-10zM1444 107h6v9h-6z" fill="none" stroke="#333"/>
<rect x="1461" y="98" width="1" height="20" fill="#9fabc9"/>
<path d="M1471 101h5v3h-5zM1476 107h4v3h-4zM1480 111h5v4h-5z" fill="#222"/><path d="M1474 104l4 4M1478 110l4 2" stroke="#222"/>
<use href="#dd" x="1495" y="108" fill="#222"/><rect x="1505" y="98" width="1" height="20" fill="#9fabc9"/>
<use href="#wr" x="1520" y="108" fill="#333"/>
<path d="M1535 109h6v-2h8v4h-14z" fill="#222"/>
<path d="M1561 100l2 1.500-2 1.500zM1565 100l2 1.500-2 1.500z" fill="#333"/>
<path d="M31 100l1.500 1.500L31 103zM34 100l1.500 1.500L34 103z" fill="#444"/>
<circle cx="1548" cy="131" r="4" fill="none" stroke="#666" stroke-width="2"/><path d="M1545 135l-4 4" stroke="#666" stroke-width="2"/><use href="#dd" x="1561" y="132" fill="#666"/>

<!-- tree icons -->
<use href="#lk" x="1272" y="155"/><path d="M1279 149h14v13h-8" fill="none" stroke="#333"/><rect x="1279" y="149" width="14" height="2.500" fill="#333"/><path d="M1280 155v6l2-1.500 1 1.500 3-3-3-3-1 1.500z" fill="#865fc5"/>
<use href="#ex" x="1277" y="173"/><use href="#lk" x="1290" y="173"/><path d="M1298 167h13v13h-5" fill="none" stroke="#333"/><rect x="1298" y="167" width="13" height="2.500" fill="#333"/><circle cx="1301.500" cy="175.500" r="4.500" fill="#1ba1e2"/><path d="M1297 175.500h9M1301.500 171v9" stroke="#fff" stroke-width=".7"/>
<path d="M1318 195h9a3.500 3.500 0 000-7 4.500 4.500 0 00-8-1 4 4 0 00-1 8z" fill="none" stroke="#444"/><path d="M1323 190v7m-2-2l2 2 2-2" stroke="#444" fill="none"/>
<use href="#ar" x="1295" y="209"/><path d="M1325 204h5v5h-5zM1320 207h4v4h-4zM1316 211h5v3h-5zM1325 211h5v3h-5z" fill="#333"/>
<use href="#ar" x="1295" y="227"/><use href="#lk" x="1308" y="227"/><use href="#fc" x="1316" y="227"/><path d="M1321 224h4v3h-1v4h-2v-4h-1z" fill="#333"/>
<use href="#ar" x="1295" y="245"/><use href="#lk" x="1308" y="245"/><circle cx="1322.500" cy="245" r="6" fill="none" stroke="#333"/><ellipse cx="1322.500" cy="245" rx="2.500" ry="6" fill="none" stroke="#333"/><path d="M1316.500 245h12" stroke="#333"/>

<use href="#ex" x="1294" y="263"/><use href="#lk" x="1308" y="263"/><use href="#fo" x="1316" y="263"/>
<use href="#ar" x="1313" y="281"/><use href="#lk" x="1326" y="281"/><text x="1335" y="285" font-size="10" font-weight="bold" fill="#388a34">C<tspan font-size="8" dy="-1">#</tspan></text>
<use href="#ex" x="1294" y="299"/><use href="#lk" x="1308" y="299"/><use href="#fo" x="1316" y="299"/>
<use href="#ar" x="1313" y="317"/><use href="#lk" x="1326" y="317"/><text x="1335" y="321" font-size="10" font-weight="bold" fill="#388a34">C<tspan font-size="8" dy="-1">#</tspan></text>
<use href="#ex" x="1294" y="335"/><use href="#lk" x="1308" y="335"/><use href="#fo" x="1316" y="335"/>
<use href="#ar" x="1313" y="353"/><use href="#lk" x="1326" y="353"/><text x="1335" y="357" font-size="10" font-weight="bold" fill="#388a34">C<tspan font-size="8" dy="-1">#</tspan></text>
<use href="#ex" x="1294" y="371"/><use href="#lk" x="1308" y="371"/><use href="#fo" x="1316" y="371"/>
<use href="#ar" x="1313" y="389"/><use href="#lk" x="1326" y="389"/><text x="1335" y="393" font-size="10" font-weight="bold" fill="#388a34">C<tspan font-size="8" dy="-1">#</tspan></text>
<use href="#ex" x="1294" y="407"/><use href="#lk" x="1308" y="407"/><use href="#fo" x="1316" y="407"/>
<use href="#ar" x="1313" y="425"/><use href="#lk" x="1326" y="425"/><text x="1335" y="429" font-size="10" font-weight="bold" fill="#388a34">C<tspan font-size="8" dy="-1">#</tspan></text>
<use href="#ar" x="1295" y="443"/><use href="#lk" x="1308" y="443"/><use href="#fc" x="1316" y="443"/>
<use href="#ex" x="1294" y="461"/><use href="#lk" x="1308" y="461"/><use href="#fo" x="1316" y="461"/>
<use href="#lk" x="1326" y="479"/><use href="#rz" x="1335" y="479"/>
<use href="#lk" x="1326" y="497"/><use href="#rz" x="1335" y="497"/>
<use href="#lk" x="1326" y="515"/><use href="#rz" x="1335" y="515"/>
<use href="#lk" x="1326" y="533"/><use href="#rz" x="1335" y="533"/>
<use href="#ex" x="1312" y="551"/><use href="#lk" x="1326" y="551"/><use href="#rz" x="1335" y="551"/>
<use href="#ar" x="1332" y="569"/><use href="#lk" x="1344" y="569"/><text x="1353" y="573" font-size="10" font-weight="bold" fill="#388a34">C<tspan font-size="8" dy="-1">#</tspan></text>
<use href="#lk" x="1326" y="587"/><use href="#rz" x="1335" y="587"/>
<use href="#ex" x="1294" y="605"/><use href="#lk" x="1308" y="605"/><use href="#fo" x="1316" y="605"/>
<use href="#ar" x="1313" y="623"/><path d="M1326 623l2 2.500 3-5.500" fill="none" stroke="#e51400" stroke-width="1.800"/><use href="#rz" x="1335" y="623"/>
<use href="#lk" x="1326" y="641"/><use href="#rz" x="1335" y="641"/>
<use href="#lk" x="1308" y="659"/><use href="#rz" x="1317" y="659"/>
<use href="#lk" x="1308" y="677"/><use href="#rz" x="1317" y="677"/>
<use href="#ex" x="1294" y="695"/><use href="#lk" x="1308" y="695"/><use href="#js" x="1315" y="695"/>
<use href="#lk" x="1326" y="713"/><use href="#js" x="1333" y="713"/>
<path d="M1308 731h6M1311 728v6" stroke="#388a34" stroke-width="1.600"/><path d="M1321 731v-6h6l3 3v10h-3" fill="none" stroke="#3a3a3a"/><circle cx="1320" cy="737" r="2.500" fill="#1ba1e2"/><path d="M1316 736l-1 1 1 1M1324 736l1 1-1 1" stroke="#333" fill="none"/>
<use href="#ar" x="1295" y="749"/><use href="#lk" x="1308" y="749"/><text x="1317" y="753" font-size="10" font-weight="bold" fill="#388a34">C<tspan font-size="8" dy="-1">#</tspan></text>
<use href="#ar" x="1295" y="767"/><use href="#lk" x="1308" y="767"/><text x="1317" y="771" font-size="10" font-weight="bold" fill="#388a34">C<tspan font-size="8" dy="-1">#</tspan></text>

<!-- properties toolbar -->
<use href="#dd" x="1561" y="850" fill="#222"/>
<path d="M1274 868h4v4h-4zM1274 875h4v4h-4zM1280 869h7M1280 871h7M1280 876h7M1280 878h7" fill="none" stroke="#222"/>
<text x="1296" y="874" font-size="8" font-weight="bold" fill="#333">A</text><text x="1296" y="883" font-size="8" font-weight="bold" fill="#333">Z</text><path d="M1307 869v11m-3-3l3 3 3-3" stroke="#0e4c8f" stroke-width="2" fill="none"/>
<rect x="1318" y="866" width="1" height="20" fill="#9fabc9"/><use href="#wr" x="1332" y="875" fill="#a5abbd"/>

<!-- status bar icons -->
<path d="M7 1142h13l-3 13H4z" fill="none" stroke="#fff" stroke-width="1.200"/>
<path d="M1258 1154v-10m-4 4l4-4 4 4" fill="none" stroke="#fff" stroke-width="1.800"/>
<path d="M1303 1154l1-4 6-6 3 3-6 6z" fill="#e8d8d5"/>
<path d="M1358 1141l8 8-8 8-8-8z" fill="#fff"/><path d="M1356 1145l4 4v4" stroke="#a34e44" fill="none"/>
<path d="M1465 1144l6 5 6-5M1471 1149v7" fill="none" stroke="#fff" stroke-width="1.200"/><circle cx="1465" cy="1143" r="1" fill="#fff"/><circle cx="1477" cy="1143" r="1" fill="#fff"/>
<path d="M1527 1151l4-4 4 4z" fill="#fff"/>
<path d="M1564 1153q2-1 2-5a4 4 0 018 0q0 3 2 5z" fill="#e8d8d5"/>
<circle cx="1576" cy="1154" r="5" fill="#fff"/>
<text x="1573" y="1158" font-size="10" font-weight="bold" fill="#111">4</text>
</svg>
</body></html>
